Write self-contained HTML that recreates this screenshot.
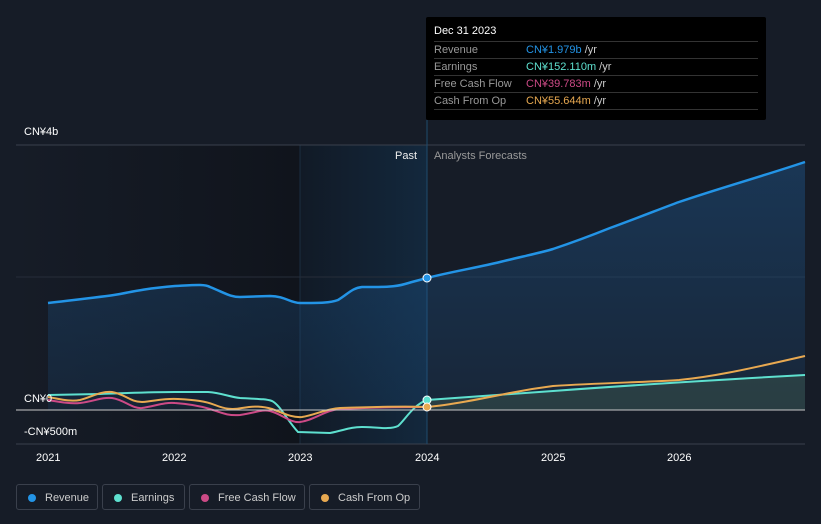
<!DOCTYPE html>
<html><head><meta charset="utf-8"><style>
body{margin:0;background:#161c27;width:821px;height:524px;overflow:hidden;font-family:"Liberation Sans","Noto Sans CJK SC",sans-serif;position:relative}
.t{position:absolute;font-size:11px;color:#fff}
.tip{position:absolute;left:426px;top:17px;width:340px;height:103px;background:#000;border-radius:2px}
.tip .r{position:absolute;left:8px;width:324px;border-top:1px solid #333;height:17px;font-size:11px;color:#999;line-height:17px}
.tip .r span{position:absolute;left:92px}
.leg{position:absolute;top:484px;height:26px;border:1px solid #3a404c;border-radius:3px;font-size:11px;color:#ccc;line-height:26px;box-sizing:border-box}
.leg i{position:absolute;left:11px;top:9px;width:8px;height:8px;border-radius:50%}
.leg b{font-weight:normal;position:absolute;left:28px}
</style></head><body>
<svg width="821" height="524" style="position:absolute;left:0;top:0">
<defs>
<linearGradient id="g" x1="0" y1="0" x2="0" y2="1"><stop offset="0" stop-color="#1f5e9a" stop-opacity=".4"/><stop offset="1" stop-color="#1f5e9a" stop-opacity=".15"/></linearGradient>
<linearGradient id="p" x1="0" y1="0" x2="1" y2="0"><stop offset="0" stop-color="#161c27"/><stop offset="1" stop-color="#10141c"/></linearGradient>
<linearGradient id="b" x1="0" y1="0" x2="1" y2="0"><stop offset="0" stop-color="#111a26"/><stop offset="1" stop-color="#13283d"/></linearGradient>
</defs>
<rect x="16" y="145" width="284" height="299" fill="url(#p)"/>
<rect x="300" y="145" width="127" height="299" fill="url(#b)"/>
<line x1="300" y1="145" x2="300" y2="444" stroke="#1a2d40"/>
<line x1="16" y1="145" x2="805" y2="145" stroke="#39404c"/>
<line x1="16" y1="277" x2="805" y2="277" stroke="#262d39"/>
<line x1="16" y1="444" x2="805" y2="444" stroke="#39404c"/>
<line x1="427" y1="120" x2="427" y2="444" stroke="#1f4b6e"/>
<path d="M48,303 C90,298 110,296 120,294 C135,291 150,288 175,286 C195,285 205,284 210,287 C225,293 230,297 240,297 L270,296 C285,296 290,303 300,303 C320,303 330,303 338,300 C348,294 352,288 362,287 C385,287 395,287 405,284 C415,281 420,280 427,278 C450,272 480,267 500,262 C520,257 540,253 553,249 C580,240 600,232 610,228 C640,217 660,209 679,202 C720,188 760,177 805,162 L805,410 L48,410Z" fill="url(#g)"/>
<path d="M48,303 C90,298 110,296 120,294 C135,291 150,288 175,286 C195,285 205,284 210,287 C225,293 230,297 240,297 L270,296 C285,296 290,303 300,303 C320,303 330,303 338,300 C348,294 352,288 362,287 C385,287 395,287 405,284 C415,281 420,280 427,278 C450,272 480,267 500,262 C520,257 540,253 553,249 C580,240 600,232 610,228 C640,217 660,209 679,202 C720,188 760,177 805,162" fill="none" stroke="#2394e6" stroke-width="2.5"/>
<path d="M427,400 C480,396 520,393 553,391 C620,386 679,382 805,375 L805,410 L427,410Z" fill="#4a6a55" opacity=".35"/>
<path d="M48,395 L100,394 C130,393 150,392 175,392 L208,392 C222,393 230,397 240,398 C260,399 266,399 272,401 C280,405 287,420 298,432 L330,433 C345,430 350,427 362,427 C375,427 390,430 398,426 C405,420 413,405 427,400 C480,396 520,393 553,391 C620,386 679,382 805,375" fill="none" stroke="#5ee0cf" stroke-width="2"/>
<path d="M48,400 C60,402 70,404 80,403 C95,401 102,397 112,398 C125,400 132,409 142,408 C155,406 165,402 175,403 C190,404 200,406 210,409 C222,413 228,416 240,415 C255,413 262,409 270,411 C282,414 290,423 300,422 C315,420 325,410 340,409 C360,408 400,407 427,407" fill="none" stroke="#cc4a86" stroke-width="2"/>
<path d="M48,397 C60,399 70,402 80,400 C92,397 100,391 112,392 C125,394 130,402 142,402 C155,401 165,398 178,399 C195,400 205,401 215,405 C225,409 232,410 242,408 C255,406 262,406 272,409 C283,413 292,418 302,417 C315,415 325,409 340,408 C370,407 400,406 427,407 C450,405 480,399 510,393 C530,389 545,387 553,386 C600,383 650,382 679,380 C710,377 740,371 805,356" fill="none" stroke="#e8a951" stroke-width="2"/>
<line x1="16" y1="410" x2="805" y2="410" stroke="#c8c8c8" stroke-width="1"/>
<circle cx="427" cy="278" r="4" fill="#2394e6" stroke="#fff" stroke-width="1"/>
<circle cx="427" cy="400" r="4" fill="#5ee0cf" stroke="#fff" stroke-width="1"/>
<circle cx="427" cy="407" r="4" fill="#e8a951" stroke="#fff" stroke-width="1"/>
</svg>
<div class="t" style="left:24px;top:126px">CN¥4b</div>
<div class="t" style="left:24px;top:393px">CN¥0</div>
<div class="t" style="left:24px;top:426px">-CN¥500m</div>
<div class="t" style="left:395px;top:150px;color:#eee">Past</div>
<div class="t" style="left:434px;top:150px;color:#999">Analysts Forecasts</div>
<div class="t" style="left:36px;top:452px">2021</div>
<div class="t" style="left:162px;top:452px">2022</div>
<div class="t" style="left:288px;top:452px">2023</div>
<div class="t" style="left:415px;top:452px">2024</div>
<div class="t" style="left:541px;top:452px">2025</div>
<div class="t" style="left:667px;top:452px">2026</div>
<div class="tip">
<div style="position:absolute;left:8px;top:8px;font-size:11px;color:#fff">Dec 31 2023</div>
<div class="r" style="top:24px">Revenue<span style="color:#2394e6">CN¥1.979b <em style="font-style:normal;color:#ccc">/yr</em></span></div>
<div class="r" style="top:41px">Earnings<span style="color:#5ee0cf">CN¥152.110m <em style="font-style:normal;color:#ccc">/yr</em></span></div>
<div class="r" style="top:58px">Free Cash Flow<span style="color:#cc4a86">CN¥39.783m <em style="font-style:normal;color:#ccc">/yr</em></span></div>
<div class="r" style="top:75px">Cash From Op<span style="color:#e8a951">CN¥55.644m <em style="font-style:normal;color:#ccc">/yr</em></span></div>
<div class="r" style="top:92px;height:0"></div>
</div>
<div class="leg" style="left:16px;width:82px"><i style="background:#2394e6"></i><b>Revenue</b></div>
<div class="leg" style="left:102px;width:83px"><i style="background:#5ee0cf"></i><b>Earnings</b></div>
<div class="leg" style="left:189px;width:116px"><i style="background:#cc4a86"></i><b>Free Cash Flow</b></div>
<div class="leg" style="left:309px;width:111px"><i style="background:#e8a951"></i><b>Cash From Op</b></div>
</body></html>
